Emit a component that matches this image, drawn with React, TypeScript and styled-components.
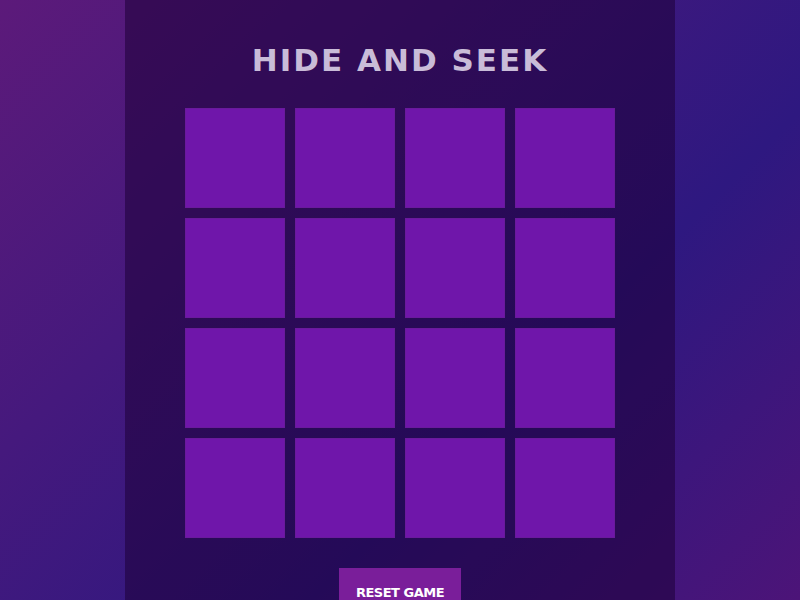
import styled, { createGlobalStyle } from 'styled-components';

const GlobalStyle = createGlobalStyle`
  html, body {
    margin: 0;
    padding: 0;
    height: 100%;
  }
  body {
    font-family: "DejaVu Sans", Verdana, sans-serif;
    background: linear-gradient(135deg, #5c1a7a 0%, #2e1880 65%, #4c1478 100%);
    background-attachment: fixed;
    min-height: 100vh;
    overflow: hidden;
  }
`;

const Panel = styled.main`
  width: 550px;
  min-height: 100vh;
  margin: 0 auto;
  padding-top: 40px;
  box-sizing: border-box;
  background: rgba(30, 0, 55, 0.55);
  display: flex;
  flex-direction: column;
  align-items: center;
`;

const Title = styled.h1`
  margin: 0;
  font-size: 31px;
  font-weight: bold;
  letter-spacing: 2px;
  line-height: 40px;
  color: #c9bcd8;
`;

const Board = styled.div`
  margin-top: 28px;
  display: grid;
  grid-template-columns: repeat(4, 100px);
  grid-auto-rows: 100px;
  gap: 10px;
`;

const Tile = styled.button`
  all: unset;
  box-sizing: border-box;
  background: #6f16aa;
  border: 1px solid #6a1a9c;
  cursor: pointer;
`;

const ResetButton = styled.button`
  margin-top: 30px;
  width: 122px;
  padding: 17px 0 13px;
  border: none;
  background: #7a1e9a;
  color: #ffffff;
  font-family: "DejaVu Sans", Verdana, sans-serif;
  font-size: 13px;
  font-weight: bold;
  letter-spacing: -0.5px;
  cursor: pointer;
`;

const tiles = Array.from({ length: 16 }, (_, i) => i);

const App = () => (
  <>
    <GlobalStyle />
    <Panel>
      <Title>HIDE AND SEEK</Title>
      <Board>
        {tiles.map((t) => (
          <Tile key={t} type="button" aria-label={`tile ${t + 1}`} />
        ))}
      </Board>
      <ResetButton type="button">RESET GAME</ResetButton>
    </Panel>
  </>
);

export default App;
